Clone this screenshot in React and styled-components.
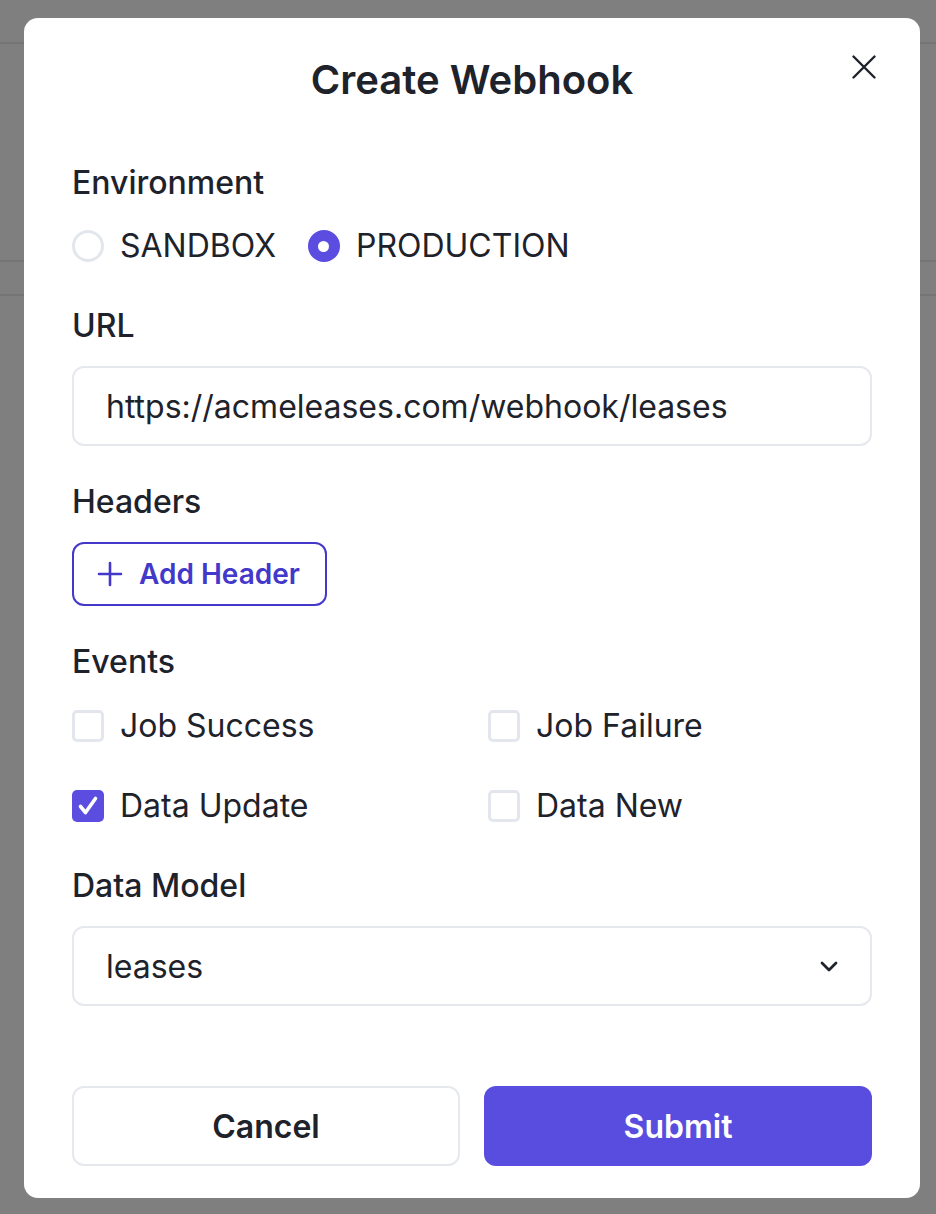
import React from 'react';
import styled, { createGlobalStyle } from 'styled-components';

const Global = createGlobalStyle`
  html, body { margin: 0; padding: 0; }
  body {
    font-family: Inter, "Noto Sans", "Liberation Sans", sans-serif;
    background: #ffffff;
    color: #1e222b;
    -webkit-font-smoothing: antialiased;
  }
  * { box-sizing: border-box; }
`;

const Page = styled.div`
  min-height: 1214px;
  background: #ffffff;
`;

const PageBand = styled.div`
  height: ${(p) => p.$h}px;
  border-bottom: 2px solid #e8eaee;
`;

const Overlay = styled.div`
  position: fixed;
  inset: 0;
  background: rgba(0, 0, 0, 0.5);
  display: flex;
  justify-content: flex-start;
  align-items: flex-start;
  padding: 18px 0 0 24px;
`;

const Dialog = styled.div`
  position: relative;
  width: 896px;
  background: #ffffff;
  border-radius: 14px;
  padding: 38px 48px 32px;
  display: flex;
  flex-direction: column;
`;

const Title = styled.h2`
  margin: 0;
  font-size: 40px;
  line-height: 48px;
  font-weight: 600;
  text-align: center;
  color: #1e222b;
`;

const CloseButton = styled.button`
  position: absolute;
  top: 37px;
  right: 44px;
  width: 24px;
  height: 24px;
  padding: 0;
  border: none;
  background: none;
  color: #1e222b;
  display: flex;
  cursor: pointer;
`;

const Field = styled.div`
  margin-top: ${(p) => p.$mt}px;
  display: flex;
  flex-direction: column;
`;

const Label = styled.div`
  font-size: 32px;
  line-height: 40px;
  font-weight: 500;
  color: #1e222b;
  margin-bottom: ${(p) => p.$gap ?? 20}px;
`;

const RadioGroup = styled.div`
  display: flex;
  align-items: center;
  gap: 32px;
  height: 40px;
`;

const Option = styled.label`
  display: flex;
  align-items: center;
  gap: 16px;
  font-size: 32px;
  line-height: 40px;
  color: #1e222b;
`;

const RadioDot = styled.span`
  width: 32px;
  height: 32px;
  border-radius: 50%;
  flex-shrink: 0;
  display: flex;
  align-items: center;
  justify-content: center;
  border: ${(p) => (p.$on ? 'none' : '3px solid #e3e7ed')};
  background: ${(p) => (p.$on ? '#5a4de0' : '#ffffff')};
  &::after {
    content: '';
    display: ${(p) => (p.$on ? 'block' : 'none')};
    width: 11px;
    height: 11px;
    border-radius: 50%;
    background: #ffffff;
  }
`;

const TextBox = styled.div`
  height: 80px;
  border: 2px solid #e5e8ed;
  border-radius: 12px;
  padding: 0 30px 0 32px;
  display: flex;
  align-items: center;
  justify-content: space-between;
  font-size: 32px;
  color: #1e222b;
`;

const AddButton = styled.button`
  align-self: flex-start;
  height: 64px;
  border: 2px solid #4338ca;
  border-radius: 12px;
  background: #ffffff;
  color: #4338ca;
  padding: 0 25px 0 23px;
  display: flex;
  align-items: center;
  gap: 16px;
  font-family: inherit;
  font-size: 28px;
  font-weight: 600;
`;

const CheckGrid = styled.div`
  display: grid;
  grid-template-columns: 1fr 1fr;
  column-gap: 32px;
  row-gap: 40px;
`;

const CheckBox = styled.span`
  width: 32px;
  height: 32px;
  border-radius: 5px;
  flex-shrink: 0;
  display: flex;
  align-items: center;
  justify-content: center;
  border: ${(p) => (p.$on ? 'none' : '3px solid #e3e7ed')};
  background: ${(p) => (p.$on ? '#5a4de0' : '#ffffff')};
`;

const Footer = styled.div`
  margin-top: 80px;
  display: grid;
  grid-template-columns: 1fr 1fr;
  gap: 24px;
`;

const ActionButton = styled.button`
  height: 80px;
  border-radius: 12px;
  font-family: inherit;
  font-size: 32px;
  font-weight: 600;
  border: ${(p) => (p.$primary ? 'none' : '2px solid #e5e8ed')};
  background: ${(p) => (p.$primary ? '#594de0' : '#ffffff')};
  color: ${(p) => (p.$primary ? '#ffffff' : '#1e222b')};
`;

const Check = () => (
  <svg width="32" height="32" viewBox="0 0 32 32" fill="none" stroke="#ffffff" strokeWidth="3.6" strokeLinecap="round" strokeLinejoin="round">
    <path d="M8.5 16.5L13.5 22.5L23.5 8.5" />
  </svg>
);

const events = [
  { label: 'Job Success', on: false },
  { label: 'Job Failure', on: false },
  { label: 'Data Update', on: true },
  { label: 'Data New', on: false },
];

export default function App() {
  return (
    <>
      <Global />
      <Page>
        <PageBand $h={44} />
        <PageBand $h={218} />
        <PageBand $h={34} />
      </Page>
      <Overlay>
        <Dialog>
          <Title>Create Webhook</Title>
          <CloseButton aria-label="Close">
            <svg width="24" height="24" viewBox="0 0 24 24" fill="none" stroke="currentColor" strokeWidth="2.4" strokeLinecap="round">
              <path d="M1.5 1.5L22.5 22.5M22.5 1.5L1.5 22.5" />
            </svg>
          </CloseButton>

          <Field $mt={59}>
            <Label $gap={23}>Environment</Label>
            <RadioGroup>
              <Option><RadioDot />SANDBOX</Option>
              <Option><RadioDot $on />PRODUCTION</Option>
            </RadioGroup>
          </Field>

          <Field $mt={40}>
            <Label>URL</Label>
            <TextBox>https://acmeleases.com/webhook/leases</TextBox>
          </Field>

          <Field $mt={36}>
            <Label>Headers</Label>
            <AddButton>
              <svg width="26" height="26" viewBox="0 0 26 26" fill="none" stroke="currentColor" strokeWidth="2.6" strokeLinecap="round">
                <path d="M13 2V24M2 13H24" />
              </svg>
              Add Header
            </AddButton>
          </Field>

          <Field $mt={36}>
            <Label $gap={24}>Events</Label>
            <CheckGrid>
              {events.map((e) => (
                <Option key={e.label}>
                  <CheckBox $on={e.on}>{e.on && <Check />}</CheckBox>
                  {e.label}
                </Option>
              ))}
            </CheckGrid>
          </Field>

          <Field $mt={40}>
            <Label>Data Model</Label>
            <TextBox>
              leases
              <svg width="22" height="22" viewBox="0 0 22 22" fill="none" stroke="#1e222b" strokeWidth="2.8" strokeLinecap="round" strokeLinejoin="round">
                <path d="M4 8l7 7 7-7" />
              </svg>
            </TextBox>
          </Field>

          <Footer>
            <ActionButton>Cancel</ActionButton>
            <ActionButton $primary>Submit</ActionButton>
          </Footer>
        </Dialog>
      </Overlay>
    </>
  );
}
